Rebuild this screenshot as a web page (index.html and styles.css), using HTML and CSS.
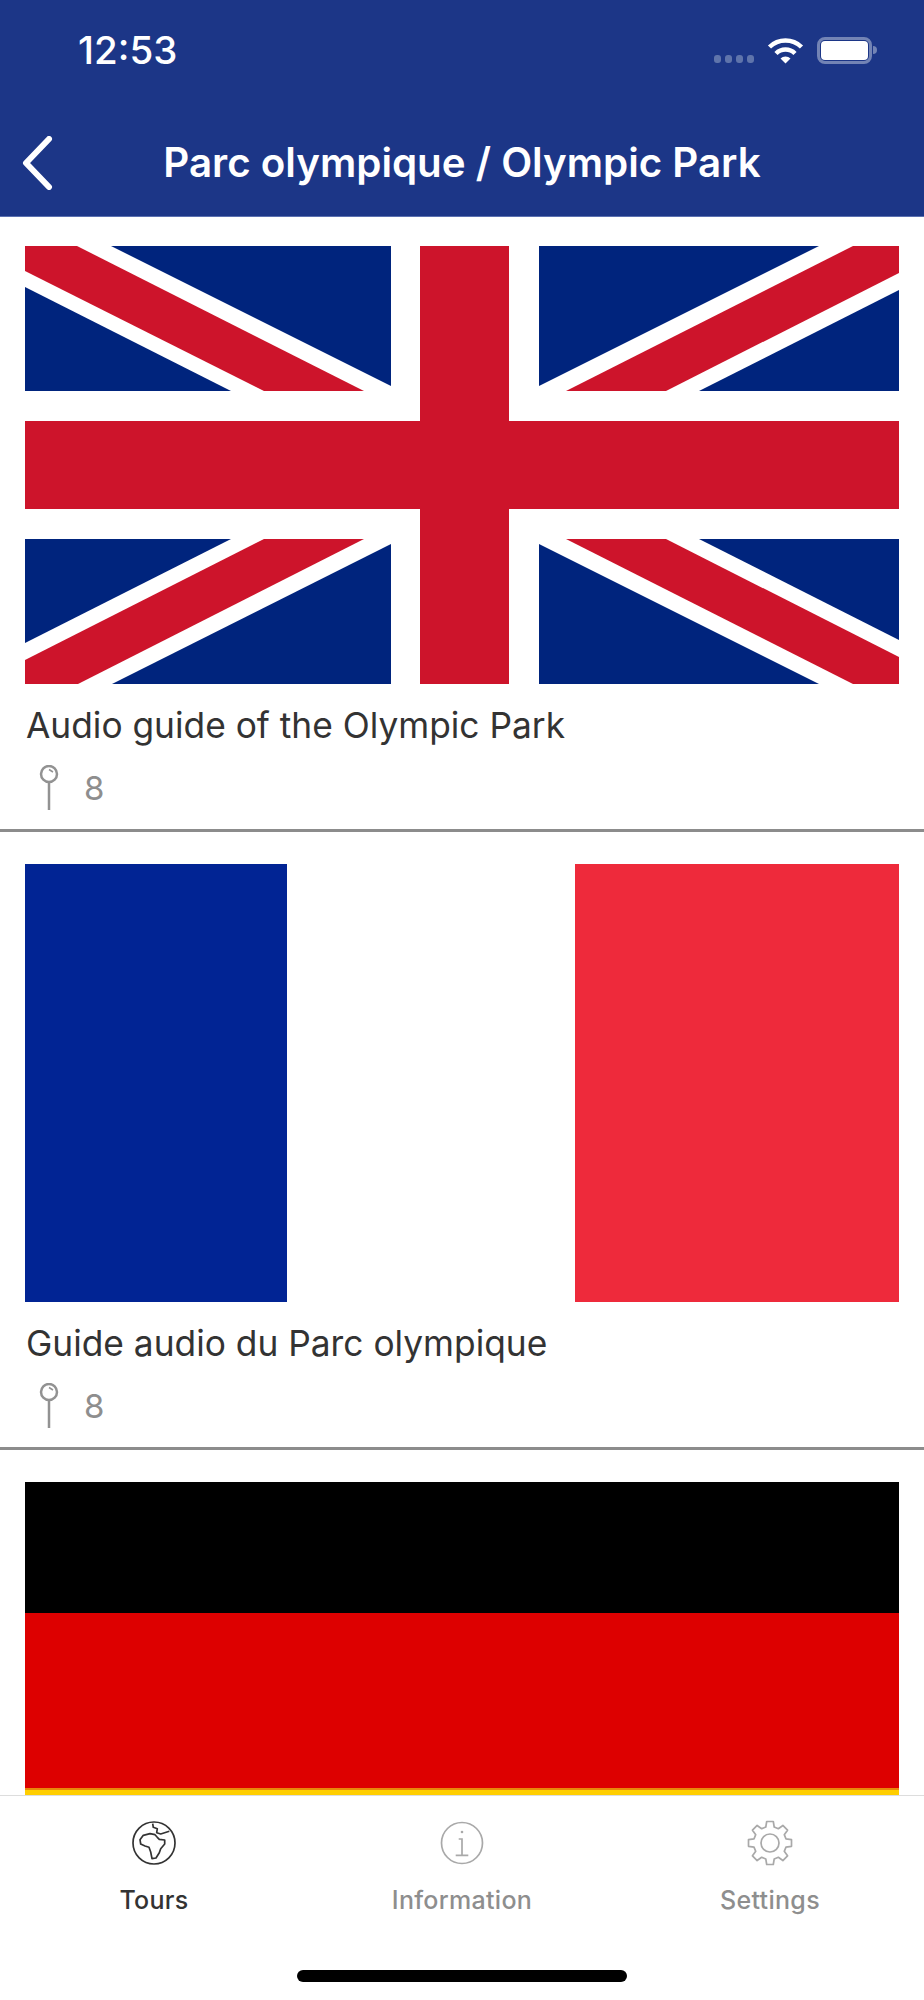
FILE: index.html
```html
<!DOCTYPE html>
<html lang="en">
  <head>
    <meta charset="UTF-8" />
    <meta name="viewport" content="width=device-width, initial-scale=1.0" />
    <title>Parc olympique / Olympic Park</title>
    <link rel="stylesheet" href="styles.css">
  </head>
  <body>
    <div class="app">
      <!-- top bar -->
      <header class="topbar">
        <div class="status">
          <span class="time">12:53</span>
          <div class="status-icons">
            <div class="signal"><i></i><i></i><i></i><i></i></div>
            <svg class="wifi" width="37" height="28" viewBox="0 0 37 28">
              <path d="M2.5 11A23 23 0 0 1 34.500 11" fill="none" stroke="#fff" stroke-width="4.500" />
              <path d="M9 17.500A13.500 13.500 0 0 1 28 17.500" fill="none" stroke="#fff" stroke-width="4.500" />
              <path d="M13.500 22.500A7 7 0 0 1 23.500 22.500L18.500 27.500Z" fill="#fff" />
            </svg>
            <div class="battery"><div class="battery-level"></div></div>
            <div class="battery-nub"></div>
          </div>
        </div>
        <div class="nav">
          <svg class="back" width="32" height="54" viewBox="0 0 32 54">
            <path d="M28 3L5 27L28 51" fill="none" stroke="#fff" stroke-width="6" stroke-linecap="round" stroke-linejoin="round" />
          </svg>
          <h1>Parc olympique / Olympic Park</h1>
        </div>
      </header>

      <!-- tours -->
      <main class="list">
        <article class="tour">
          <svg class="flag" viewBox="0 0 874 438" preserveAspectRatio="none">
            <rect width="874" height="438" fill="#fff" />
            <g fill="#00247d">
              <polygon points="86,0 366,0 366,140" />
              <polygon points="0,41 206,145 0,145" />
              <polygon points="514,0 794,0 514,140" />
              <polygon points="874,44 874,145 674,145" />
              <polygon points="0,293 206,293 0,397" />
              <polygon points="366,298 366,438 87,438" />
              <polygon points="514,298 514,438 794,438" />
              <polygon points="674,293 874,293 874,394" />
            </g>
            <g fill="#cd142b">
              <polygon points="0,0 52,0 339,145 239,145 0,25" />
              <polygon points="828,0 874,0 874,27 641,145 541,145" />
              <polygon points="239,293 339,293 53,438 0,438 0,414" />
              <polygon points="541,293 641,293 874,411 874,438 828,438" />
              <rect x="395" width="89" height="438" />
              <rect y="175" width="874" height="88" />
            </g>
          </svg>
          <h2>Audio guide of the Olympic Park</h2>
          <div class="stops">
            <svg class="pin" width="20" height="46" viewBox="0 0 20 46">
              <circle cx="10" cy="9" r="8" fill="none" stroke="#929292" stroke-width="2.500" />
              <path d="M10 17V45" stroke="#929292" stroke-width="2.500" />
              <path d="M10 4.500L14 7" stroke="#929292" stroke-width="1.500" />
            </svg>
            <span>8</span>
          </div>
        </article>

        <article class="tour">
          <div class="flag flag-fr"><div></div><div></div><div></div></div>
          <h2>Guide audio du Parc olympique</h2>
          <div class="stops">
            <svg class="pin" width="20" height="46" viewBox="0 0 20 46">
              <circle cx="10" cy="9" r="8" fill="none" stroke="#929292" stroke-width="2.500" />
              <path d="M10 17V45" stroke="#929292" stroke-width="2.500" />
              <path d="M10 4.500L14 7" stroke="#929292" stroke-width="1.500" />
            </svg>
            <span>8</span>
          </div>
        </article>

        <article class="tour">
          <div class="flag flag-de"><div></div><div></div><div></div></div>
        </article>
      </main>

      <!-- tab bar -->
      <nav class="tabbar">
        <div class="tabs">
          <div class="tab active">
            <svg width="46" height="46" viewBox="-23 -23 46 46" fill="none" stroke="#333" stroke-width="1.700" stroke-linejoin="round">
              <circle r="21" />
              <path d="M-1.300 -19.300L-.7 -15.700L3.300 -14.300L2.700 -10.300L6.700 -9L15.300 -11.700" />
              <path d="M1 -8.300L-4 -9.300L-10.700 -7.700L-14 -3.300L-13.300 1L-9 3L-5 4.300L-3.300 9L-2 15.700L2 15L5.300 9.700L6.700 5.700L10.700 1L10.700 -3L5.300 -3.700L3.300 -5.700Z" />
            </svg>
            <span>Tours</span>
          </div>
          <div class="tab">
            <svg width="46" height="46" viewBox="-23 -23 46 46" fill="none" stroke="#a9a9a9" stroke-width="1.700">
              <circle r="20.500" />
              <circle cy="-11" r="1.300" fill="#a9a9a9" stroke="none" />
              <path d="M-3.300 -4H0V12.300M-6.300 12.300H6.300" />
            </svg>
            <span>Information</span>
          </div>
          <div class="tab">
            <svg width="46" height="46" viewBox="-23 -23 46 46" fill="none" stroke="#a9a9a9" stroke-width="1.700" stroke-linejoin="round">
              <polygon points="-4.200,-16 -3.300,-21.500 3.300,-21.500 4.200,-16 8.340,-14.280 12.870,-17.530 17.530,-12.870 14.280,-8.340 16,-4.200 21.500,-3.300 21.500,3.300 16,4.200 14.280,8.340 17.530,12.870 12.870,17.530 8.340,14.280 4.200,16 3.300,21.500 -3.300,21.500 -4.200,16 -8.340,14.280 -12.870,17.530 -17.530,12.870 -14.280,8.340 -16,4.200 -21.500,3.300 -21.500,-3.300 -16,-4.200 -14.280,-8.340 -17.530,-12.870 -12.870,-17.530 -8.340,-14.280" />
              <circle r="9" />
            </svg>
            <span>Settings</span>
          </div>
        </div>
        <div class="home-bar"></div>
      </nav>
    </div>
  </body>
</html>
```

FILE: styles.css
```css
* {
  margin: 0;
  padding: 0;
  box-sizing: border-box;
}
body {
  background-color: #fff;
  font-family: Inter, "Liberation Sans", sans-serif;
}
.app {
  width: 924px;
  height: 2000px;
  display: flex;
  flex-direction: column;
  overflow: hidden;
}

/* ===top bar=== */
.topbar {
  height: 217px;
  flex-shrink: 0;
  background-color: #1c3687;
  border-bottom: 1px solid #5a70b0;
  color: #fff;
  padding-top: 36px;
}
.status {
  height: 28px;
  display: flex;
  justify-content: space-between;
  align-items: center;
  padding: 0 47px 0 78px;
}
.time {
  font-size: 38.5px;
  font-weight: 500;
  line-height: 28px;
}
.status-icons {
  display: flex;
  align-items: center;
}
.signal {
  display: flex;
  gap: 4px;
  margin: 18px 13px 0 0;
}
.signal i {
  width: 7px;
  height: 8px;
  border-radius: 3px;
  background-color: #5f74ab;
}
.battery {
  width: 55px;
  height: 27px;
  margin-left: 13px;
  padding: 1px;
  border: 3px solid #7384b5;
  border-radius: 8px;
}
.battery-level {
  height: 100%;
  background-color: #fff;
  border-radius: 4px;
}
.battery-nub {
  width: 4px;
  height: 8px;
  margin-left: 1px;
  background-color: #7384b5;
  border-radius: 0 4px 4px 0;
}
.nav {
  position: relative;
  margin-top: 72px;
  height: 54px;
  display: flex;
  justify-content: center;
  align-items: center;
}
.back {
  position: absolute;
  left: 21px;
  top: 0;
}
.nav h1 {
  font-size: 40.300px;
  font-weight: 600;
  line-height: 54px;
}

/* ===tours=== */
.list {
  flex: 1;
  min-height: 0;
  overflow: hidden;
  padding-top: 29px;
}
.tour {
  padding: 0 25px 0;
  margin-bottom: 32px;
  border-bottom: 3px solid #8c8c8c;
  height: 586px;
}
.flag {
  display: block;
  width: 874px;
  height: 438px;
}
.tour h2 {
  font-size: 35.300px;
  font-weight: 400;
  line-height: 44px;
  color: #333;
  margin: 20px 0 0 1px;
}
.stops {
  display: flex;
  align-items: center;
  margin: 17px 0 0 14px;
  color: #8e8e8e;
  font-size: 33px;
}
.stops span {
  margin-left: 25px;
}
.pin {
  flex-shrink: 0;
}
.flag-fr {
  display: flex;
}
.flag-fr div:nth-child(1) {
  width: 262px;
  background-color: #012494;
}
.flag-fr div:nth-child(2) {
  width: 288px;
  background-color: #fff;
}
.flag-fr div:nth-child(3) {
  width: 324px;
  background-color: #ee2a3b;
}
.flag-de div:nth-child(1) {
  height: 131px;
  background-color: #000;
}
.flag-de div:nth-child(2) {
  height: 175px;
  background-color: #dd0000;
}
.flag-de div:nth-child(3) {
  height: 132px;
  background-color: #ffce00;
  border-top: 2px solid #e8870a;
}

/* ===tab bar=== */
.tabbar {
  position: relative;
  height: 205px;
  flex-shrink: 0;
  background-color: #fff;
  border-top: 1px solid #ddd;
}
.tabs {
  display: grid;
  grid-template-columns: repeat(3, 308px);
  padding-top: 24px;
}
.tab {
  display: flex;
  flex-direction: column;
  align-items: center;
  gap: 19px;
  color: #8e8e8e;
  font-size: 25px;
  font-weight: 500;
  letter-spacing: .3px;
  line-height: 30px;
}
.tab.active {
  color: #333;
}
.home-bar {
  position: absolute;
  left: 297px;
  bottom: 18px;
  width: 330px;
  height: 12px;
  background-color: #000;
  border-radius: 6px;
}
```
